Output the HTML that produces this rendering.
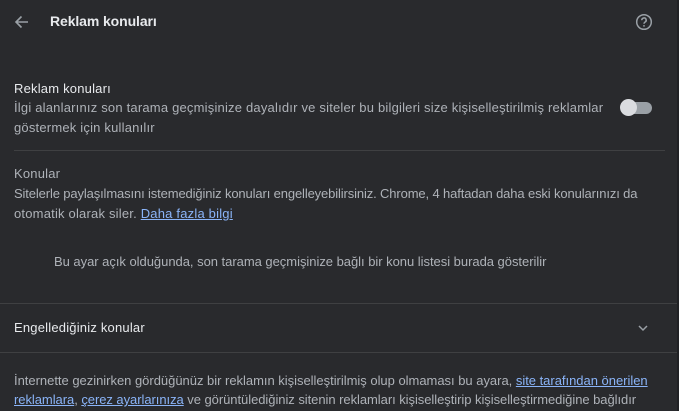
<html><head><style>
body{margin:0;width:679px;height:411px;background:#292a2d;font-family:"Liberation Sans",sans-serif;font-size:13px;letter-spacing:0.2px;color:#aeb2b8;position:relative;overflow:hidden}
.a{position:absolute;white-space:nowrap}
.p{color:#e8eaed}
a{color:#8ab4f8;text-decoration:underline}
.hr{position:absolute;height:1px;background:#3f4042}
</style></head><body>
<svg class="a" style="left:13px;top:13px" width="18" height="18" viewBox="0 0 18 18"><path d="M15 9H3M8.5 3.5L3 9l5.5 5.5" stroke="#9aa0a6" stroke-width="1.6" fill="none"/></svg>
<div class="a p" style="left:50px;top:13px;font-size:14px;font-weight:bold;letter-spacing:-0.1px">Reklam konuları</div>
<svg class="a" style="left:635px;top:13px" width="18" height="18" viewBox="0 0 18 18"><circle cx="9" cy="9" r="7.3" stroke="#9aa0a6" stroke-width="1.5" fill="none"/><path d="M6.8 7.2a2.2 2.2 0 1 1 3.2 1.9c-.7.4-1 .8-1 1.6" stroke="#9aa0a6" stroke-width="1.5" fill="none"/><circle cx="9" cy="12.9" r=".9" fill="#9aa0a6"/></svg>
<div class="a p" style="left:14px;top:81px;font-size:13px">Reklam konuları</div>
<div class="a" style="left:14px;top:100px">İlgi alanlarınız son tarama geçmişinize dayalıdır ve siteler bu bilgileri size kişiselleştirilmiş reklamlar</div>
<div class="a" style="left:14px;top:120px">göstermek için kullanılır</div>
<div class="a" style="left:622px;top:102px;width:30px;height:12px;border-radius:6px;background:#9aa0a6"></div>
<div class="a" style="left:620px;top:99px;width:17px;height:17px;border-radius:50%;background:#dadce0"></div>
<div class="hr" style="left:14px;top:150px;width:651px"></div>
<div class="a" style="left:14px;top:166px">Konular</div>
<div class="a" style="left:14px;top:186px;letter-spacing:-0.13px">Sitelerle paylaşılmasını istemediğiniz konuları engelleyebilirsiniz. Chrome, 4 haftadan daha eski konularınızı da</div>
<div class="a" style="left:14px;top:206px">otomatik olarak siler. <a>Daha fazla bilgi</a></div>
<div class="a" style="left:54px;top:254px;letter-spacing:-0.03px">Bu ayar açık olduğunda, son tarama geçmişinize bağlı bir konu listesi burada gösterilir</div>
<div class="hr" style="left:0;top:303px;width:677px"></div>
<div class="a p" style="left:14px;top:320px">Engellediğiniz konular</div>
<svg class="a" style="left:636px;top:321px" width="14" height="14" viewBox="0 0 14 14"><path d="M3 5l4 4 4-4" stroke="#9aa0a6" stroke-width="1.5" fill="none"/></svg>
<div class="hr" style="left:0;top:352px;width:677px"></div>
<div class="a" style="left:14px;top:373px;letter-spacing:-0.02px">İnternette gezinirken gördüğünüz bir reklamın kişiselleştirilmiş olup olmaması bu ayara, <a>site tarafından önerilen</a></div>
<div class="a" style="left:14px;top:392px;letter-spacing:-0.05px"><a>reklamlara</a>, <a>çerez ayarlarınıza</a> ve görüntülediğiniz sitenin reklamları kişiselleştirip kişiselleştirmediğine bağlıdır</div>
<div class="a" style="left:677px;top:0;width:2px;height:411px;background:#202124"></div>
</body></html>
